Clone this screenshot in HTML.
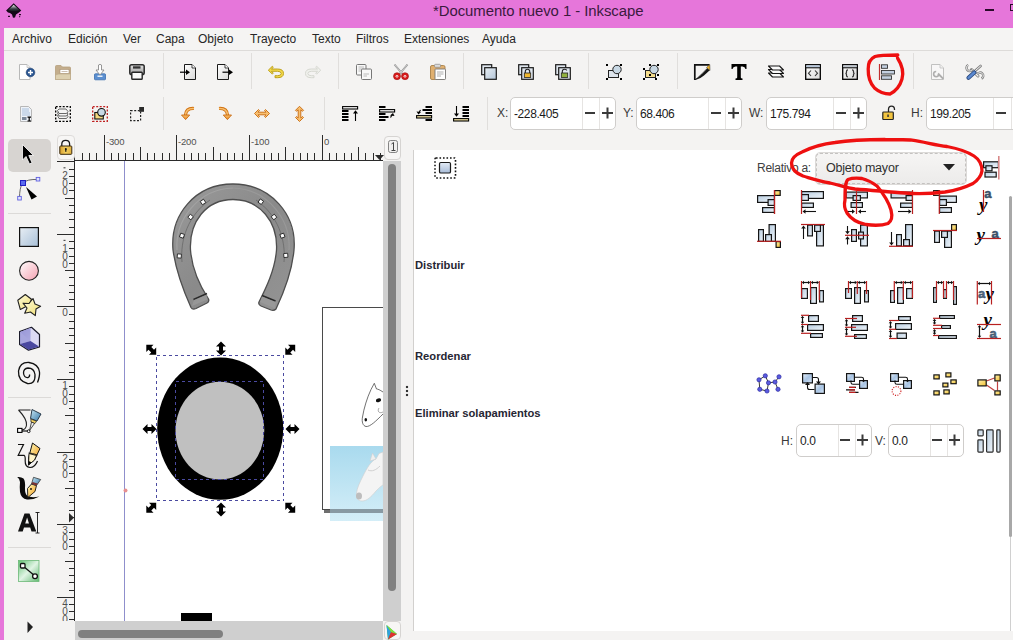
<!DOCTYPE html>
<html><head><meta charset="utf-8">
<style>
*{margin:0;padding:0;box-sizing:border-box}
html,body{width:1013px;height:640px;overflow:hidden;background:#f4f3f2;font-family:"Liberation Sans",sans-serif;color:#222;position:relative}
.a{position:absolute}
.mi{position:absolute;top:32px;font-size:12px;color:#262626;white-space:nowrap}
.sep{position:absolute;width:1px;background:#e0dedc}
.lbl{position:absolute;font-size:12px;color:#3a3a3a;white-space:nowrap}
.sp{position:absolute;height:33px;background:#fff;border:1px solid #cfcdcb;border-radius:5px}
.sp .v{position:absolute;left:3px;top:9px;font-size:12px;letter-spacing:-0.4px;color:#1a1a1a}
.sp .d{position:absolute;top:0;width:1px;height:31px;background:#e6e4e2}
.sec{position:absolute;left:415px;font-size:11.2px;font-weight:bold;color:#262633;white-space:nowrap}
</style></head><body>
<div class="a" style="left:0;top:0;width:1013px;height:28px;background:#e676da"></div>
<div class="a" style="left:0;top:0;width:4px;height:640px;background:#e676da"></div>
<svg class="a" style="left:0;top:0" width="30" height="25">
<defs><linearGradient id="lg" x1="0" y1="0" x2="0" y2="1"><stop offset="0" stop-color="#f4f4f4"/><stop offset="0.6" stop-color="#3a4048"/><stop offset="1" stop-color="#101418"/></linearGradient></defs>
<path d="M13.7 3.3 L21.3 10.5 L19 12.5 L17.5 13.5 L16 14.5 L15 17.5 L13 17.8 L12 14.5 L10 13 L8 12.5 L6.1 10.5 Z" fill="#140818"/>
<path d="M13.7 4.8 L19.5 10.3 L13.7 11.5 L8 10.3 Z" fill="url(#lg)"/>
<rect x="8" y="15.8" width="2" height="1.2" fill="#2a0a2a"/><rect x="19" y="14" width="2" height="1.2" fill="#2a0a2a"/><rect x="19" y="16.2" width="1.2" height="1" fill="#2a0a2a"/>
</svg>
<div class="a" style="left:433px;top:3px;font-size:14.9px;letter-spacing:-0.05px;color:#3b1a3e;white-space:nowrap">*Documento nuevo 1 - Inkscape</div>
<div class="a" style="left:985px;top:9px;width:9px;height:2px;background:#2a0a2a"></div>
<div class="a" style="left:1010px;top:4px;width:8px;height:7px;border:1.5px solid #2a0a2a"></div>
<div class="a" style="left:4px;top:28px;width:1009px;height:23px;background:#f5f4f3;border-bottom:1px solid #dddbd9"></div>
<div class="mi" style="left:12px">Archivo</div>
<div class="mi" style="left:68px">Edición</div>
<div class="mi" style="left:123px">Ver</div>
<div class="mi" style="left:156px">Capa</div>
<div class="mi" style="left:198px">Objeto</div>
<div class="mi" style="left:250px">Trayecto</div>
<div class="mi" style="left:312px">Texto</div>
<div class="mi" style="left:356px">Filtros</div>
<div class="mi" style="left:404px">Extensiones</div>
<div class="mi" style="left:482px">Ayuda</div>

<div class="sep" style="left:163px;top:53px;height:36px"></div>
<div class="sep" style="left:251px;top:53px;height:36px"></div>
<div class="sep" style="left:338px;top:53px;height:36px"></div>
<div class="sep" style="left:463px;top:53px;height:36px"></div>
<div class="sep" style="left:588px;top:53px;height:36px"></div>
<div class="sep" style="left:677px;top:53px;height:36px"></div>
<div class="sep" style="left:913px;top:53px;height:36px"></div>
<div class="sep" style="left:163px;top:97px;height:33px"></div>
<div class="sep" style="left:324px;top:97px;height:33px"></div>
<div class="sep" style="left:487px;top:97px;height:33px"></div>

<div class="lbl" style="left:497px;top:106px">X:</div>
<div class="sp" style="left:510px;top:97px;width:106px"><span class="v">-228.405</span><div class="d" style="left:71px"></div><div class="d" style="left:88px"></div></div>
<div class="lbl" style="left:623px;top:106px">Y:</div>
<div class="sp" style="left:636px;top:97px;width:106px"><span class="v">68.406</span><div class="d" style="left:71px"></div><div class="d" style="left:88px"></div></div>
<div class="lbl" style="left:749px;top:106px">W:</div>
<div class="sp" style="left:766px;top:97px;width:101px"><span class="v">175.794</span><div class="d" style="left:66px"></div><div class="d" style="left:83px"></div></div>
<div class="lbl" style="left:911px;top:106px">H:</div>
<div class="sp" style="left:926px;top:97px;width:120px"><span class="v">199.205</span><div class="d" style="left:66px"></div><div class="d" style="left:84px"></div></div>

<!-- toolbox -->
<div class="a" style="left:8px;top:139px;width:43px;height:33px;background:#d7d4d1;border-radius:5px"></div>
<div class="a" style="left:8px;top:213px;width:43px;height:1px;background:#dcdad8"></div>
<div class="a" style="left:8px;top:397px;width:43px;height:1px;background:#dcdad8"></div>
<div class="a" style="left:8px;top:547px;width:43px;height:1px;background:#dcdad8"></div>
<svg class="a" style="left:0;top:0" width="60" height="640">
<defs>
<linearGradient id="trc" x1="0" y1="0" x2="1" y2="1"><stop offset="0" stop-color="#e8eef4"/><stop offset="1" stop-color="#a8c0d8"/></linearGradient>
<linearGradient id="tci" x1="0" y1="0" x2="1" y2="1"><stop offset="0" stop-color="#fff"/><stop offset="1" stop-color="#f4a0b0"/></linearGradient>
<linearGradient id="tst" x1="0" y1="0" x2="1" y2="1"><stop offset="0" stop-color="#fffbe0"/><stop offset="1" stop-color="#f0e070"/></linearGradient>
<linearGradient id="tbx" x1="0" y1="0" x2="1" y2="1"><stop offset="0" stop-color="#8a88d0"/><stop offset="1" stop-color="#e8e6f8"/></linearGradient>
<linearGradient id="tgr" x1="0" y1="0" x2="1" y2="1"><stop offset="0" stop-color="#60c070"/><stop offset="0.5" stop-color="#e0f4e4"/><stop offset="1" stop-color="#60b870"/></linearGradient>
<linearGradient id="tbl" x1="0" y1="0" x2="1" y2="1"><stop offset="0" stop-color="#c8e8f4"/><stop offset="1" stop-color="#3878a8"/></linearGradient>
<linearGradient id="tyl" x1="0" y1="0" x2="1" y2="1"><stop offset="0" stop-color="#ffffc0"/><stop offset="1" stop-color="#f09010"/></linearGradient>
</defs>
<!-- select arrow -->
<path d="M22.5 144.5 L22.5 160 L26 156.5 L29.5 164 L32 162.8 L28.8 155.5 L33.5 155.5 Z" fill="#000" stroke="#fff" stroke-width="0.8" stroke-linejoin="round"/>
<!-- node -->
<path d="M23 183 Q27 179 38 179.5" fill="none" stroke="#666" stroke-width="1"/>
<path d="M22.5 183 Q19.5 188 19.5 198" fill="none" stroke="#666" stroke-width="1"/>
<rect x="20.5" y="180.5" width="5" height="5" fill="#5a6af0" stroke="#2020c0" stroke-width="1"/>
<rect x="36.2" y="177.4" width="3.6" height="3.6" fill="#e0e4ff" stroke="#6060e0" stroke-width="0.9"/>
<rect x="17.7" y="196.4" width="3.6" height="3.6" fill="#e0e4ff" stroke="#6060e0" stroke-width="0.9"/>
<path d="M26 187 L37 196.5 L31.5 199.5 Z" fill="#000"/>
<!-- rect -->
<rect x="19.6" y="227.6" width="18.8" height="18.8" fill="url(#trc)" stroke="#111" stroke-width="1.2"/>
<!-- circle -->
<circle cx="29" cy="270.8" r="9.4" fill="url(#tci)" stroke="#222" stroke-width="1.1"/>
<!-- star/polygon -->
<path d="M17.8 300.3 L25.3 294.5 L31.5 299.3 L29 305 L20.3 309.5 Z" fill="url(#tst)" stroke="#222" stroke-width="1.1" stroke-linejoin="round"/>
<path d="M33 298.5 L35 304 L40.6 306.2 L36 309 L35.3 315.6 L30.5 312 L24.7 313.3 L27 308 L23 303.2 L29 303.5 Z" fill="url(#tst)" stroke="#222" stroke-width="1.1" stroke-linejoin="round"/>
<!-- 3d box -->
<path d="M31.5 327.3 L19.6 331.6 L19.6 344.5 L28.5 350.2 L39.5 347 L39.5 334.5 Z" fill="#dcdaf4" stroke="#1a1a2a" stroke-width="1.2" stroke-linejoin="round"/>
<path d="M20.2 332 L30.5 341 L30.5 328" fill="url(#tbx)" opacity="0.9"/>
<path d="M20 332 L30.5 328 L30.5 341 L20 344 Z" fill="#9a98d8" opacity="0.8"/>
<path d="M20 344 L30.5 341 L39 346.5 L28.5 349.8 Z" fill="#4a48a0"/>
<!-- spiral -->
<path d="M37.5 382.5 Q40 376 39.5 372 Q38.5 364 29 362.5 Q20 362 18.5 371 Q18 381 27.5 383.5 Q35.5 384.5 35 374.5 Q34 368 28 368 Q23.5 368.5 23.5 373 Q24 378 28 377.5 Q30 377 29.5 374.5" fill="none" stroke="#111" stroke-width="1.3"/>
<!-- bezier pen -->
<path d="M18.5 410 H30.5 M18.5 410 Q27 419 26.5 425 Q26 429.5 22 430" fill="none" stroke="#222" stroke-width="1.1"/>
<rect x="17.6" y="428.4" width="4.4" height="4" fill="#fff" stroke="#000" stroke-width="1.1"/>
<path d="M22 431 H27.5" stroke="#000" stroke-width="1.1"/>
<circle cx="28.7" cy="431.2" r="1.4" fill="#fff" stroke="#000" stroke-width="0.9"/>
<path d="M32 409.5 L41 414 L37 421 L30.5 418.5 Z" fill="url(#tbl)" stroke="#1a2a3a" stroke-width="0.9" stroke-linejoin="round"/>
<path d="M30.8 419 L36.5 421.2 L35 423.5 L31 422 Z" fill="#f0d060" stroke="#222" stroke-width="0.7"/>
<path d="M31.5 422 L34.5 423.5 L29.5 430.5 Z" fill="#eee" stroke="#222" stroke-width="0.8"/>
<!-- pencil -->
<path d="M18 444.5 H23.5 L18.2 455.3 H24 Q25.5 456 25.2 461 Q25 467 30 467.5 Q35 467.5 37.5 461" fill="none" stroke="#111" stroke-width="1.2"/>
<path d="M32.5 443 L40 448.5 L34.5 460 L28.5 465 L28.5 458 Z" fill="url(#tyl)" stroke="#111" stroke-width="1" stroke-linejoin="round"/>
<path d="M28.6 453 Q32 453 37.5 455" fill="none" stroke="#111" stroke-width="0.9"/>
<path d="M29 453.5 L36.5 455.5 L34.5 460 L28.5 465 Z" fill="#fff4c8" stroke="#111" stroke-width="0.9" stroke-linejoin="round"/>
<path d="M28.5 461 L28.5 465 L31.5 462.3 Z" fill="#000"/>
<!-- calligraphy -->
<path d="M17.2 477 Q21 476.5 23.5 478.5 Q25.5 481 25 488 Q24.8 494 27.5 496 Q31 498 39.5 496.5 Q33 500 27 499.5 Q21 498.5 20 492 Q19.5 486 20 482 Q20 479 17.2 477 Z" fill="#0a0a0a"/>
<path d="M27.8 497.5 L27.5 488.5 L31.5 484 L36.5 485.5 L35 491.5 Z" fill="url(#tyl)" stroke="#111" stroke-width="0.9" stroke-linejoin="round"/>
<circle cx="31" cy="489" r="0.9" fill="#000"/>
<path d="M31.5 484 L33.5 477.3 L40.7 479.5 L36.5 485.5 Z" fill="url(#tbl)" stroke="#222" stroke-width="0.7"/>
<path d="M31.8 484 L36.5 485.5 L37.5 483.5 L32.5 482 Z" fill="#7a3030"/>
<!-- text A -->
<path d="M18 531.5 L24.5 513.5 H29.5 L36.3 531.5 H31.5 L30.2 527.5 H24 L22.7 531.5 Z M25.2 523.5 H29 L27.1 517.5 Z" fill="#111" fill-rule="evenodd"/>
<path d="M35.5 512.5 H39.5 M37.5 512.5 V533 M35.5 533 H39.5" stroke="#111" stroke-width="0.9"/>
<!-- connector -->
<rect x="18.5" y="560.5" width="20.5" height="21" fill="url(#tgr)" stroke="#6cb878" stroke-width="0.8"/>
<path d="M23 566 L35 576" stroke="#111" stroke-width="1.3"/>
<rect x="20.5" y="563.5" width="4.5" height="4.5" rx="1" fill="#fff" stroke="#111" stroke-width="1.3"/>
<circle cx="35" cy="576.2" r="2.4" fill="#fff" stroke="#111" stroke-width="1.3"/>
<!-- more arrow -->
<path d="M27.5 621.5 L33 627 L27.5 633 Z" fill="#222"/>
</svg>


<!-- canvas -->
<div class="a" style="left:75px;top:161px;width:308px;height:460px;background:#fff;overflow:hidden">
<svg style="position:absolute;left:0;top:0" width="308" height="460" viewBox="75 161 308 460">
<defs>
<linearGradient id="hs" x1="0" y1="0" x2="1" y2="1"><stop offset="0" stop-color="#9a9a9a"/><stop offset="0.5" stop-color="#8a8a8a"/><stop offset="1" stop-color="#949494"/></linearGradient>
<linearGradient id="sky" x1="0" y1="0" x2="0" y2="1"><stop offset="0" stop-color="#a9daee"/><stop offset="1" stop-color="#d4eef8"/></linearGradient>
</defs>
<!-- guide -->
<line x1="124.5" y1="161" x2="124.5" y2="621" stroke="#8f8fcc" stroke-width="1"/>
<circle cx="125.5" cy="490.5" r="2" fill="#e89090"/>
<!-- horseshoe -->
<path d="M191 307.5 C184 292, 176 272, 173 250 C170 215, 195 184, 233 184 C271 184, 297 215, 294 250 C292 272, 284 292, 276 309 Q274 311 271 310 L261 306 Q258 304.5 259 302 C266 288, 275 270, 276.5 250 C278 222, 260 199.5, 233 199.5 C206 199.5, 189 222, 190.5 250 C192 270, 200 286, 208.5 299 Q209.5 301.5 207 303 L196 308.5 Q192.5 310 191 307.5 Z" fill="url(#hs)" stroke="#4e4e4e" stroke-width="1.3" stroke-linejoin="round"/>
<path d="M177 250 C175 220, 198 189, 233 188" fill="none" stroke="#a8a8a8" stroke-width="1.2" opacity="0.7"/>
<path d="M233 188 C268 189, 291 220, 289 250" fill="none" stroke="#a0a0a0" stroke-width="1.2" opacity="0.6"/>
<path d="M182 262 C180 240, 188 215, 210 200" fill="none" stroke="#5e5e5e" stroke-width="0.8" opacity="0.8"/>
<path d="M284 262 C286 240, 278 215, 256 200" fill="none" stroke="#5e5e5e" stroke-width="0.8" opacity="0.8"/>
<path d="M193.5 299.5 L207 293.5" stroke="#2a2a2a" stroke-width="1.6"/>
<path d="M262 295.5 L275.5 301" stroke="#2a2a2a" stroke-width="1.6"/>
<path d="M192 306 L207.5 299.5 L207 294.5 L194 300 Z" fill="#9c9c9c" opacity="0.7"/>
<path d="M260 302 L275 308.5 L275.5 302 L262 296.5 Z" fill="#9c9c9c" opacity="0.7"/>
<g fill="#fff" stroke="#2a2a2a" stroke-width="0.9">
<rect x="201" y="200" width="4" height="4" transform="rotate(-35 203 202)"/>
<rect x="188.6" y="215" width="4" height="4" transform="rotate(-50 190.6 217)"/>
<rect x="180" y="233.7" width="4" height="4" transform="rotate(-70 182 235.7)"/>
<rect x="177.3" y="254" width="4" height="4" transform="rotate(-85 179.3 256)"/>
<rect x="258.8" y="199.7" width="4" height="4" transform="rotate(35 260.8 201.7)"/>
<rect x="272" y="215" width="4" height="4" transform="rotate(50 274 217)"/>
<rect x="280.4" y="233.7" width="4" height="4" transform="rotate(70 282.4 235.7)"/>
<rect x="283.8" y="253.4" width="4" height="4" transform="rotate(85 285.8 255.4)"/>
</g>
<!-- page -->
<rect x="324" y="509" width="70" height="4" fill="#6f6f6f"/>
<rect x="322.5" y="307.5" width="80" height="202" fill="#fff" stroke="#4a4a4a" stroke-width="1"/>
<!-- blue pic -->
<rect x="330" y="446" width="60" height="75" fill="url(#sky)"/>
<rect x="330" y="509" width="60" height="4" fill="#7f9099" opacity="0.9"/>
<path d="M383 452 L379 453.5 L376 459 C371 461, 367 468, 363 476 C360 482, 357 488, 356.5 493 C356 498, 358 501, 362 501 C367 501, 371 497, 376 491 C379 488, 381 486, 383 485 Z" fill="#f4f4f4" stroke="#cfcfcf" stroke-width="0.6"/>
<path d="M370 461 L372.5 453 L376 459 Z" fill="#eee" stroke="#ccc" stroke-width="0.5"/>
<path d="M368 470 C372 472, 376 470, 380 466" fill="none" stroke="#c8c8c8" stroke-width="0.8"/>
<ellipse cx="359" cy="496" rx="3" ry="3.5" fill="#bdbdbd"/>
<!-- line horse -->
<path d="M383 392 C380 390, 378 389, 376.5 389 L374.3 383.3 L371 389.5 C367 398, 364 408, 362.5 417 C361.5 422, 363 426, 366 426.5 C370 427, 376 421, 383 414" fill="none" stroke="#333" stroke-width="0.7"/>
<path d="M379 408 C377 411, 379 414, 383 412" fill="none" stroke="#555" stroke-width="0.5"/>
<ellipse cx="378.5" cy="400.3" rx="2.7" ry="1.8" fill="#111" transform="rotate(-20 378.5 400.3)"/>
<ellipse cx="365.8" cy="419.8" rx="1.3" ry="1.7" fill="#111"/>
<!-- ellipse -->
<ellipse cx="220.2" cy="428.6" rx="63" ry="71.2" fill="#000"/>
<ellipse cx="219.9" cy="430.6" rx="44.4" ry="48.9" fill="#c0c0c0"/>
<g fill="none" stroke="#4a4aa0" stroke-width="1" stroke-dasharray="3 3" shape-rendering="crispEdges">
<rect x="156.5" y="355.5" width="127" height="145"/>
<rect x="175.5" y="381.5" width="88" height="97.5"/>
</g>
<!-- handles -->
<g fill="#000">
<path d="M221 341.5 L226 346.5 L223 346.5 L223 350.5 L226 350.5 L221 355.5 L216 350.5 L219 350.5 L219 346.5 L216 346.5 Z"/>
<path d="M221 341.5 L226 346.5 L223 346.5 L223 350.5 L226 350.5 L221 355.5 L216 350.5 L219 350.5 L219 346.5 L216 346.5 Z" transform="translate(0 161)"/>
<path d="M142.5 429 L147.5 424 L147.5 427 L151.5 427 L151.5 424 L156.5 429 L151.5 434 L151.5 431 L147.5 431 L147.5 434 Z"/>
<path d="M142.5 429 L147.5 424 L147.5 427 L151.5 427 L151.5 424 L156.5 429 L151.5 434 L151.5 431 L147.5 431 L147.5 434 Z" transform="translate(143 0)"/>
<path d="M146.3 344.8 L153.5 344.8 L151.3 347 L154 349.7 L156.2 347.5 L156.2 354.7 L149 354.7 L151.2 352.5 L148.5 349.8 L146.3 352 Z"/>
<path d="M146.3 344.8 L153.5 344.8 L151.3 347 L154 349.7 L156.2 347.5 L156.2 354.7 L149 354.7 L151.2 352.5 L148.5 349.8 L146.3 352 Z" transform="translate(441.5 0) scale(-1 1)"/>
<path d="M146.3 344.8 L153.5 344.8 L151.3 347 L154 349.7 L156.2 347.5 L156.2 354.7 L149 354.7 L151.2 352.5 L148.5 349.8 L146.3 352 Z" transform="translate(0 857.5) scale(1 -1)"/>
<path d="M146.3 344.8 L153.5 344.8 L151.3 347 L154 349.7 L156.2 347.5 L156.2 354.7 L149 354.7 L151.2 352.5 L148.5 349.8 L146.3 352 Z" transform="translate(441.5 857.5) scale(-1 -1)"/>
</g>
<!-- bottom black -->
<rect x="181" y="613" width="31" height="8" fill="#000"/>
</svg>

</div>
<svg class="a" style="left:0;top:0" width="1013" height="640">
<g stroke="#2b2b2b" stroke-width="1" shape-rendering="crispEdges"><line x1="74.5" y1="153" x2="74.5" y2="160.5"/><line x1="82.5" y1="153" x2="82.5" y2="160.5"/><line x1="89.5" y1="153" x2="89.5" y2="160.5"/><line x1="96.5" y1="153" x2="96.5" y2="160.5"/><line x1="104.5" y1="135" x2="104.5" y2="160.5"/><line x1="111.5" y1="153" x2="111.5" y2="160.5"/><line x1="118.5" y1="153" x2="118.5" y2="160.5"/><line x1="125.5" y1="153" x2="125.5" y2="160.5"/><line x1="133.5" y1="153" x2="133.5" y2="160.5"/><line x1="140.5" y1="147" x2="140.5" y2="160.5"/><line x1="147.5" y1="153" x2="147.5" y2="160.5"/><line x1="154.5" y1="153" x2="154.5" y2="160.5"/><line x1="162.5" y1="153" x2="162.5" y2="160.5"/><line x1="169.5" y1="153" x2="169.5" y2="160.5"/><line x1="176.5" y1="135" x2="176.5" y2="160.5"/><line x1="184.5" y1="153" x2="184.5" y2="160.5"/><line x1="191.5" y1="153" x2="191.5" y2="160.5"/><line x1="198.5" y1="153" x2="198.5" y2="160.5"/><line x1="205.5" y1="153" x2="205.5" y2="160.5"/><line x1="213.5" y1="147" x2="213.5" y2="160.5"/><line x1="220.5" y1="153" x2="220.5" y2="160.5"/><line x1="227.5" y1="153" x2="227.5" y2="160.5"/><line x1="234.5" y1="153" x2="234.5" y2="160.5"/><line x1="242.5" y1="153" x2="242.5" y2="160.5"/><line x1="249.5" y1="135" x2="249.5" y2="160.5"/><line x1="256.5" y1="153" x2="256.5" y2="160.5"/><line x1="264.5" y1="153" x2="264.5" y2="160.5"/><line x1="271.5" y1="153" x2="271.5" y2="160.5"/><line x1="278.5" y1="153" x2="278.5" y2="160.5"/><line x1="285.5" y1="147" x2="285.5" y2="160.5"/><line x1="293.5" y1="153" x2="293.5" y2="160.5"/><line x1="300.5" y1="153" x2="300.5" y2="160.5"/><line x1="307.5" y1="153" x2="307.5" y2="160.5"/><line x1="314.5" y1="153" x2="314.5" y2="160.5"/><line x1="322.5" y1="135" x2="322.5" y2="160.5"/><line x1="329.5" y1="153" x2="329.5" y2="160.5"/><line x1="336.5" y1="153" x2="336.5" y2="160.5"/><line x1="344.5" y1="153" x2="344.5" y2="160.5"/><line x1="351.5" y1="153" x2="351.5" y2="160.5"/><line x1="358.5" y1="147" x2="358.5" y2="160.5"/><line x1="365.5" y1="153" x2="365.5" y2="160.5"/><line x1="373.5" y1="153" x2="373.5" y2="160.5"/><line x1="380.5" y1="153" x2="380.5" y2="160.5"/><line x1="74" y1="160.5" x2="383" y2="160.5"/><line x1="57" y1="161.5" x2="74.5" y2="161.5"/><line x1="69" y1="169.5" x2="74.5" y2="169.5"/><line x1="69" y1="176.5" x2="74.5" y2="176.5"/><line x1="69" y1="183.5" x2="74.5" y2="183.5"/><line x1="69" y1="190.5" x2="74.5" y2="190.5"/><line x1="65" y1="198.5" x2="74.5" y2="198.5"/><line x1="69" y1="205.5" x2="74.5" y2="205.5"/><line x1="69" y1="212.5" x2="74.5" y2="212.5"/><line x1="69" y1="219.5" x2="74.5" y2="219.5"/><line x1="69" y1="227.5" x2="74.5" y2="227.5"/><line x1="57" y1="234.5" x2="74.5" y2="234.5"/><line x1="69" y1="241.5" x2="74.5" y2="241.5"/><line x1="69" y1="248.5" x2="74.5" y2="248.5"/><line x1="69" y1="256.5" x2="74.5" y2="256.5"/><line x1="69" y1="263.5" x2="74.5" y2="263.5"/><line x1="65" y1="270.5" x2="74.5" y2="270.5"/><line x1="69" y1="277.5" x2="74.5" y2="277.5"/><line x1="69" y1="285.5" x2="74.5" y2="285.5"/><line x1="69" y1="292.5" x2="74.5" y2="292.5"/><line x1="69" y1="299.5" x2="74.5" y2="299.5"/><line x1="57" y1="306.5" x2="74.5" y2="306.5"/><line x1="69" y1="314.5" x2="74.5" y2="314.5"/><line x1="69" y1="321.5" x2="74.5" y2="321.5"/><line x1="69" y1="328.5" x2="74.5" y2="328.5"/><line x1="69" y1="335.5" x2="74.5" y2="335.5"/><line x1="65" y1="343.5" x2="74.5" y2="343.5"/><line x1="69" y1="350.5" x2="74.5" y2="350.5"/><line x1="69" y1="357.5" x2="74.5" y2="357.5"/><line x1="69" y1="365.5" x2="74.5" y2="365.5"/><line x1="69" y1="372.5" x2="74.5" y2="372.5"/><line x1="57" y1="379.5" x2="74.5" y2="379.5"/><line x1="69" y1="386.5" x2="74.5" y2="386.5"/><line x1="69" y1="394.5" x2="74.5" y2="394.5"/><line x1="69" y1="401.5" x2="74.5" y2="401.5"/><line x1="69" y1="408.5" x2="74.5" y2="408.5"/><line x1="65" y1="415.5" x2="74.5" y2="415.5"/><line x1="69" y1="423.5" x2="74.5" y2="423.5"/><line x1="69" y1="430.5" x2="74.5" y2="430.5"/><line x1="69" y1="437.5" x2="74.5" y2="437.5"/><line x1="69" y1="444.5" x2="74.5" y2="444.5"/><line x1="57" y1="452.5" x2="74.5" y2="452.5"/><line x1="69" y1="459.5" x2="74.5" y2="459.5"/><line x1="69" y1="466.5" x2="74.5" y2="466.5"/><line x1="69" y1="473.5" x2="74.5" y2="473.5"/><line x1="69" y1="481.5" x2="74.5" y2="481.5"/><line x1="65" y1="488.5" x2="74.5" y2="488.5"/><line x1="69" y1="495.5" x2="74.5" y2="495.5"/><line x1="69" y1="502.5" x2="74.5" y2="502.5"/><line x1="69" y1="510.5" x2="74.5" y2="510.5"/><line x1="69" y1="517.5" x2="74.5" y2="517.5"/><line x1="57" y1="524.5" x2="74.5" y2="524.5"/><line x1="69" y1="532.5" x2="74.5" y2="532.5"/><line x1="69" y1="539.5" x2="74.5" y2="539.5"/><line x1="69" y1="546.5" x2="74.5" y2="546.5"/><line x1="69" y1="553.5" x2="74.5" y2="553.5"/><line x1="65" y1="561.5" x2="74.5" y2="561.5"/><line x1="69" y1="568.5" x2="74.5" y2="568.5"/><line x1="69" y1="575.5" x2="74.5" y2="575.5"/><line x1="69" y1="582.5" x2="74.5" y2="582.5"/><line x1="69" y1="590.5" x2="74.5" y2="590.5"/><line x1="57" y1="597.5" x2="74.5" y2="597.5"/><line x1="69" y1="604.5" x2="74.5" y2="604.5"/><line x1="69" y1="611.5" x2="74.5" y2="611.5"/><line x1="69" y1="619.5" x2="74.5" y2="619.5"/><line x1="74.5" y1="161" x2="74.5" y2="621"/></g>
<g font-family="Liberation Sans" font-size="10" fill="#505050"><text x="106" y="144.8" font-size="9.5" letter-spacing="-0.2">-300</text><text x="178" y="144.8" font-size="9.5" letter-spacing="-0.2">-200</text><text x="251" y="144.8" font-size="9.5" letter-spacing="-0.2">-100</text><text x="324" y="144.8" font-size="9.5" letter-spacing="-0.2">0</text><rect x="63.5" y="167.2" width="2" height="1.2"/><text x="65" y="179.2" text-anchor="middle">2</text><text x="65" y="187.2" text-anchor="middle">0</text><text x="65" y="195.2" text-anchor="middle">0</text><rect x="63.5" y="239.8" width="2" height="1.2"/><text x="65" y="251.8" text-anchor="middle">1</text><text x="65" y="259.9" text-anchor="middle">0</text><text x="65" y="267.9" text-anchor="middle">0</text><text x="65" y="316.4" text-anchor="middle">0</text><text x="65" y="389.0" text-anchor="middle">1</text><text x="65" y="397.0" text-anchor="middle">0</text><text x="65" y="405.0" text-anchor="middle">0</text><text x="65" y="461.6" text-anchor="middle">2</text><text x="65" y="469.6" text-anchor="middle">0</text><text x="65" y="477.6" text-anchor="middle">0</text><text x="65" y="534.2" text-anchor="middle">3</text><text x="65" y="542.2" text-anchor="middle">0</text><text x="65" y="550.2" text-anchor="middle">0</text><text x="65" y="606.8" text-anchor="middle">4</text><text x="65" y="614.8" text-anchor="middle">0</text><text x="65" y="622.8" text-anchor="middle">0</text></g>
<path d="M375 155 L384 155 L379.5 160 Z" fill="#2b2b2b"/>
</svg>
<div class="a" style="left:52px;top:621px;width:23px;height:19px;background:#f4f3f2"></div>
<div class="a" style="left:57px;top:135px;width:18px;height:25px;background:#f7f6f5;border:1px solid #dedcda;border-radius:4px"></div>
<!-- vscroll -->
<div class="a" style="left:383px;top:161px;width:18px;height:460px;background:#cfcfcf"></div>
<div class="a" style="left:388px;top:164px;width:8px;height:427px;background:#808080;border-radius:4px"></div>
<div class="a" style="left:384px;top:136px;width:17px;height:24px;background:#f7f6f5;border:1px solid #d6d4d2;border-radius:4px"></div>
<!-- hscroll -->
<div class="a" style="left:75px;top:621px;width:308px;height:19px;background:#cfcfcf"></div>
<div class="a" style="left:78px;top:630px;width:145px;height:8px;background:#808080;border-radius:4px"></div>
<div class="a" style="left:384px;top:621px;width:17px;height:19px;background:#f7f6f5;border:1px solid #d6d4d2;border-radius:4px"></div>

<svg class="a" style="left:0;top:0" width="400" height="640">
<defs><linearGradient id="lkg" x1="0" y1="0" x2="1" y2="0"><stop offset="0" stop-color="#d8a030"/><stop offset="0.5" stop-color="#f4d060"/><stop offset="1" stop-color="#e0b040"/></linearGradient></defs>
<path d="M61.8 146.5 V144 Q61.8 140.3 65.7 140.3 Q69.6 140.3 69.6 144 V146.5" fill="none" stroke="#1a1a1a" stroke-width="1.3"/>
<rect x="59.8" y="146" width="12" height="8.3" rx="0.8" fill="url(#lkg)" stroke="#3a2a10" stroke-width="1"/>
<circle cx="65.8" cy="148.9" r="1" fill="#111"/><rect x="65.2" y="149" width="1.2" height="2.8" fill="#111"/>
<path d="M69 513 L74 517.7 L69 522.5 Z" fill="#2a2a2a"/>
<!-- vruler "1" page button glyph -->
<rect x="388.5" y="140.5" width="9" height="12" rx="2" fill="#f0efee" stroke="#777" stroke-width="0.9"/>
<path d="M391.5 144 L393.5 142.5 V150.5 M391.5 150.5 H395.5" fill="none" stroke="#444" stroke-width="1"/>
<!-- color picker -->
<path d="M386.5 625 L397 634 L388 639.5 Z" fill="#40c040"/>
<path d="M386.5 625 L388 639.5 L391 632 Z" fill="#30a0e0"/>
<path d="M391 632 L397 634 L388 639.5 Z" fill="#e03030"/>
<path d="M386.5 625 L391 632 L397 634 Z" fill="#80e040"/>
</svg>

<!-- dialog -->
<div class="a" style="left:413px;top:150px;width:600px;height:481px;background:#fff;border-left:1px solid #d2d0ce"></div>
<div class="a" style="left:1009px;top:196px;width:3px;height:341px;background:#a8a8a8;border-radius:2px"></div>
<div class="a" style="left:1010px;top:537px;width:1px;height:94px;background:#d0d0d0"></div>
<div class="a" style="left:405px;top:385px;width:4px;height:12px;background:radial-gradient(circle,#333 1.3px,transparent 1.6px) 0 0/4px 4px"></div>
<div class="lbl" style="left:757px;top:161px;letter-spacing:-0.25px;color:#404040">Relativo a:</div>
<div class="a" style="left:815px;top:152px;width:152px;height:33px;background:linear-gradient(#f6f5f4,#ecebea);border:1px solid #dcdad8;border-radius:5px"></div>
<div class="a" style="left:816px;top:153px;width:150px;height:31px;border:1px dashed #c4c2c0;border-radius:4px"></div>
<div class="a" style="left:826px;top:161px;font-size:12.5px;letter-spacing:-0.2px;color:#303030;white-space:nowrap">Objeto mayor</div>
<svg class="a" style="left:942px;top:164px" width="14" height="7"><path d="M1 0 L13 0 L7 6.5Z" fill="#222"/></svg>
<div class="sec" style="top:259px">Distribuir</div>
<div class="sec" style="top:350px">Reordenar</div>
<div class="sec" style="top:407px">Eliminar solapamientos</div>
<div class="lbl" style="left:781px;top:434px">H:</div>
<div class="sp" style="left:796px;top:424px;width:76px;height:33px"><span class="v" style="top:9px">0.0</span><div class="d" style="left:41px"></div><div class="d" style="left:58px"></div></div>
<div class="lbl" style="left:875px;top:434px">V:</div>
<div class="sp" style="left:888px;top:424px;width:76px;height:33px"><span class="v" style="top:9px">0.0</span><div class="d" style="left:41px"></div><div class="d" style="left:58px"></div></div>
<svg class="a" style="left:0;top:0" width="1013" height="640">
<defs>
<linearGradient id="bg" x1="0" y1="0" x2="1" y2="1"><stop offset="0" stop-color="#b8cde0"/><stop offset="1" stop-color="#f0f5fa"/></linearGradient>
<linearGradient id="bg2" x1="0" y1="0" x2="1" y2="1"><stop offset="0" stop-color="#e8f0f8"/><stop offset="0.5" stop-color="#a8c4e4"/><stop offset="1" stop-color="#d8e6f4"/></linearGradient>
<linearGradient id="bg3" x1="0" y1="0" x2="0" y2="1"><stop offset="0" stop-color="#e4ecf6"/><stop offset="1" stop-color="#a8bcd8"/></linearGradient>
<linearGradient id="yg" x1="0" y1="0" x2="1" y2="1"><stop offset="0" stop-color="#fff0b0"/><stop offset="1" stop-color="#f0c030"/></linearGradient>
</defs>
<g font-family="Liberation Sans"><line x1="774.5" y1="190" x2="774.5" y2="214" stroke="#b82020" stroke-width="1.2"/>
<rect x="774.60" y="190.60" width="5.60" height="4.80" fill="url(#yg)" stroke="#151515" stroke-width="1.2"/>
<rect x="757.60" y="195.60" width="16.80" height="6.80" fill="url(#bg)" stroke="#151515" stroke-width="1.2"/>
<rect x="768.10" y="199.60" width="6.30" height="5.80" fill="url(#bg)" stroke="#151515" stroke-width="1.2"/>
<rect x="762.60" y="207.60" width="11.80" height="4.80" fill="url(#bg)" stroke="#151515" stroke-width="1.2"/>
<line x1="774.5" y1="190" x2="774.5" y2="214" stroke="#b82020" stroke-width="1.2"/>
<rect x="801.60" y="191.60" width="21.80" height="6.80" fill="url(#bg)" stroke="#151515" stroke-width="1.2"/>
<rect x="801.60" y="194.60" width="6.80" height="5.80" fill="url(#bg)" stroke="#151515" stroke-width="1.2"/>
<rect x="801.60" y="203.10" width="11.80" height="4.30" fill="url(#bg)" stroke="#151515" stroke-width="1.2"/>
<line x1="801.5" y1="190" x2="801.5" y2="214" stroke="#b82020" stroke-width="1.2"/>
<line x1="816" y1="211.5" x2="804.5" y2="211.5" stroke="#111" stroke-width="1.1"/>
<path d="M802.5 211.5 L805.5 209.2 L805.5 213.8 Z" fill="#111"/>
<rect x="846.10" y="192.10" width="21.30" height="5.80" fill="url(#bg)" stroke="#151515" stroke-width="1.2"/>
<rect x="853.10" y="195.60" width="7.30" height="4.80" fill="url(#bg)" stroke="#151515" stroke-width="1.2"/>
<rect x="851.10" y="202.60" width="11.30" height="4.80" fill="url(#bg)" stroke="#151515" stroke-width="1.2"/>
<line x1="856.5" y1="191" x2="856.5" y2="214" stroke="#b82020" stroke-width="1.2"/>
<line x1="847" y1="211.5" x2="853" y2="211.5" stroke="#111" stroke-width="1.1"/>
<path d="M855 211.5 L852 209.2 L852 213.8 Z" fill="#111"/>
<line x1="866" y1="211.5" x2="860" y2="211.5" stroke="#111" stroke-width="1.1"/>
<path d="M858 211.5 L861 209.2 L861 213.8 Z" fill="#111"/>
<rect x="891.10" y="192.10" width="21.30" height="5.80" fill="url(#bg)" stroke="#151515" stroke-width="1.2"/>
<rect x="906.10" y="195.60" width="6.30" height="4.80" fill="url(#bg)" stroke="#151515" stroke-width="1.2"/>
<rect x="900.60" y="203.10" width="11.80" height="4.30" fill="url(#bg)" stroke="#151515" stroke-width="1.2"/>
<line x1="912.5" y1="190" x2="912.5" y2="214" stroke="#b82020" stroke-width="1.2"/>
<line x1="898" y1="211.5" x2="909.5" y2="211.5" stroke="#111" stroke-width="1.1"/>
<path d="M911.5 211.5 L908.5 209.2 L908.5 213.8 Z" fill="#111"/>
<rect x="933.6" y="190.6" width="6" height="4.8" fill="#f4e4b0" stroke="#151515" stroke-width="1.1"/>
<rect x="939.60" y="196.10" width="16.80" height="6.30" fill="url(#bg)" stroke="#151515" stroke-width="1.2"/>
<rect x="939.60" y="199.60" width="6.80" height="5.80" fill="url(#bg)" stroke="#151515" stroke-width="1.2"/>
<rect x="939.60" y="207.60" width="11.80" height="4.80" fill="url(#bg)" stroke="#151515" stroke-width="1.2"/>
<line x1="939.3" y1="190" x2="939.3" y2="214" stroke="#b82020" stroke-width="1.2"/>
<text x="984.3" y="198" font-size="13" fill="#3a5068" font-weight="bold" stroke="#3a5068" stroke-width="0.5">a</text>
<text x="979" y="210.5" font-size="19" fill="#000" font-family="Liberation Serif" font-style="italic" font-weight="bold">y</text>
<line x1="983.5" y1="190" x2="983.5" y2="212" stroke="#b82020" stroke-width="1.2"/>
<rect x="758.60" y="229.60" width="4.80" height="11.80" fill="url(#bg)" stroke="#151515" stroke-width="1.2"/>
<rect x="769.10" y="224.60" width="6.30" height="16.80" fill="url(#bg)" stroke="#151515" stroke-width="1.2"/>
<rect x="765.60" y="234.60" width="5.80" height="6.80" fill="url(#bg)" stroke="#151515" stroke-width="1.2"/>
<rect x="776.10" y="241.60" width="4.30" height="5.80" fill="url(#yg)" stroke="#151515" stroke-width="1.2"/>
<line x1="757" y1="241.3" x2="781" y2="241.3" stroke="#b82020" stroke-width="1.2"/>
<rect x="807.60" y="225.10" width="4.80" height="10.80" fill="url(#bg)" stroke="#151515" stroke-width="1.2"/>
<rect x="816.60" y="225.10" width="6.80" height="20.80" fill="url(#bg)" stroke="#151515" stroke-width="1.2"/>
<rect x="814.60" y="225.10" width="5.80" height="6.30" fill="url(#bg)" stroke="#151515" stroke-width="1.2"/>
<line x1="801" y1="224.5" x2="825" y2="224.5" stroke="#b82020" stroke-width="1.2"/>
<line x1="803.5" y1="239" x2="803.5" y2="227.5" stroke="#111" stroke-width="1.1"/>
<path d="M803.5 225.5 L801.2 228.5 L805.8 228.5 Z" fill="#111"/>
<rect x="851.60" y="229.60" width="4.80" height="11.80" fill="url(#bg)" stroke="#151515" stroke-width="1.2"/>
<rect x="860.60" y="225.10" width="6.80" height="20.80" fill="url(#bg)" stroke="#151515" stroke-width="1.2"/>
<rect x="858.60" y="232.10" width="4.80" height="6.80" fill="url(#bg)" stroke="#151515" stroke-width="1.2"/>
<line x1="845" y1="235.3" x2="869" y2="235.3" stroke="#b82020" stroke-width="1.2"/>
<line x1="847.5" y1="226" x2="847.5" y2="232.3" stroke="#111" stroke-width="1.1"/>
<path d="M847.5 234.3 L845.2 231.3 L849.8 231.3 Z" fill="#111"/>
<line x1="847.5" y1="244.5" x2="847.5" y2="238.3" stroke="#111" stroke-width="1.1"/>
<path d="M847.5 236.3 L845.2 239.3 L849.8 239.3 Z" fill="#111"/>
<rect x="896.60" y="234.60" width="4.80" height="11.30" fill="url(#bg)" stroke="#151515" stroke-width="1.2"/>
<rect x="905.60" y="224.60" width="6.80" height="21.30" fill="url(#bg)" stroke="#151515" stroke-width="1.2"/>
<rect x="903.60" y="239.60" width="5.80" height="6.30" fill="url(#bg)" stroke="#151515" stroke-width="1.2"/>
<line x1="889" y1="246.3" x2="913" y2="246.3" stroke="#b82020" stroke-width="1.2"/>
<line x1="891.5" y1="232" x2="891.5" y2="243.5" stroke="#111" stroke-width="1.1"/>
<path d="M891.5 245.5 L889.2 242.5 L893.8 242.5 Z" fill="#111"/>
<rect x="934.60" y="231.10" width="4.80" height="11.30" fill="url(#bg)" stroke="#151515" stroke-width="1.2"/>
<rect x="944.60" y="231.10" width="6.80" height="16.30" fill="url(#bg)" stroke="#151515" stroke-width="1.2"/>
<rect x="941.60" y="231.10" width="5.80" height="6.30" fill="url(#bg)" stroke="#151515" stroke-width="1.2"/>
<rect x="951.60" y="224.60" width="4.80" height="5.80" fill="url(#yg)" stroke="#151515" stroke-width="1.2"/>
<line x1="933" y1="230.5" x2="957" y2="230.5" stroke="#b82020" stroke-width="1.2"/>
<text x="976.5" y="240.5" font-size="19" fill="#000" font-family="Liberation Serif" font-style="italic" font-weight="bold">y</text>
<text x="991.5" y="238.3" font-size="13" fill="#3a5068" font-weight="bold" stroke="#3a5068" stroke-width="0.5">a</text>
<line x1="977" y1="238.5" x2="1001" y2="238.5" stroke="#b82020" stroke-width="1.2"/>
<rect x="801.60" y="288.60" width="5.80" height="9.80" fill="url(#bg)" stroke="#151515" stroke-width="1.2"/>
<rect x="810.60" y="287.60" width="5.80" height="15.80" fill="url(#bg)" stroke="#151515" stroke-width="1.2"/>
<rect x="819.60" y="290.60" width="3.80" height="11.30" fill="url(#bg)" stroke="#151515" stroke-width="1.2"/>
<line x1="801.5" y1="281" x2="801.5" y2="298" stroke="#b82020" stroke-width="1.2"/>
<line x1="810.5" y1="281" x2="810.5" y2="300" stroke="#b82020" stroke-width="1.2"/>
<line x1="819.3" y1="281" x2="819.3" y2="300" stroke="#b82020" stroke-width="1.2"/>
<line x1="802.5" y1="282.5" x2="809.5" y2="282.5" stroke="#111" stroke-width="1.2"/>
<path d="M802.0 282.5 L804.0 280.7 L804.0 284.3 Z M810.0 282.5 L808.0 280.7 L808.0 284.3 Z" fill="#111"/>
<line x1="811.5" y1="282.5" x2="818.3" y2="282.5" stroke="#111" stroke-width="1.2"/>
<path d="M811.0 282.5 L813.0 280.7 L813.0 284.3 Z M818.8 282.5 L816.8 280.7 L816.8 284.3 Z" fill="#111"/>
<rect x="845.60" y="288.60" width="5.80" height="9.80" fill="url(#bg)" stroke="#151515" stroke-width="1.2"/>
<rect x="854.60" y="287.60" width="5.80" height="15.80" fill="url(#bg)" stroke="#151515" stroke-width="1.2"/>
<rect x="864.60" y="290.60" width="3.80" height="11.30" fill="url(#bg)" stroke="#151515" stroke-width="1.2"/>
<line x1="848.5" y1="281" x2="848.5" y2="293" stroke="#b82020" stroke-width="1.2"/>
<line x1="857.3" y1="281" x2="857.3" y2="294" stroke="#b82020" stroke-width="1.2"/>
<line x1="866.5" y1="281" x2="866.5" y2="294" stroke="#b82020" stroke-width="1.2"/>
<line x1="849.5" y1="282.5" x2="856.3" y2="282.5" stroke="#111" stroke-width="1.2"/>
<path d="M849.0 282.5 L851.0 280.7 L851.0 284.3 Z M856.8 282.5 L854.8 280.7 L854.8 284.3 Z" fill="#111"/>
<line x1="858.3" y1="282.5" x2="865.5" y2="282.5" stroke="#111" stroke-width="1.2"/>
<path d="M857.8 282.5 L859.8 280.7 L859.8 284.3 Z M866.0 282.5 L864.0 280.7 L864.0 284.3 Z" fill="#111"/>
<rect x="890.60" y="290.60" width="3.80" height="11.80" fill="url(#bg)" stroke="#151515" stroke-width="1.2"/>
<rect x="897.60" y="287.60" width="5.80" height="15.80" fill="url(#bg)" stroke="#151515" stroke-width="1.2"/>
<rect x="906.60" y="288.60" width="5.80" height="9.80" fill="url(#bg)" stroke="#151515" stroke-width="1.2"/>
<line x1="894.3" y1="281" x2="894.3" y2="300" stroke="#b82020" stroke-width="1.2"/>
<line x1="903.3" y1="281" x2="903.3" y2="300" stroke="#b82020" stroke-width="1.2"/>
<line x1="912.5" y1="281" x2="912.5" y2="298" stroke="#b82020" stroke-width="1.2"/>
<line x1="895.3" y1="282.5" x2="902.3" y2="282.5" stroke="#111" stroke-width="1.2"/>
<path d="M894.8 282.5 L896.8 280.7 L896.8 284.3 Z M902.8 282.5 L900.8 280.7 L900.8 284.3 Z" fill="#111"/>
<line x1="904.3" y1="282.5" x2="911.5" y2="282.5" stroke="#111" stroke-width="1.2"/>
<path d="M903.8 282.5 L905.8 280.7 L905.8 284.3 Z M912.0 282.5 L910.0 280.7 L910.0 284.3 Z" fill="#111"/>
<rect x="933.60" y="287.60" width="2.80" height="14.80" fill="url(#bg)" stroke="#151515" stroke-width="1.2"/>
<rect x="943.60" y="289.60" width="2.80" height="8.80" fill="url(#bg)" stroke="#151515" stroke-width="1.2"/>
<rect x="953.60" y="286.60" width="2.80" height="17.80" fill="url(#bg)" stroke="#151515" stroke-width="1.2"/>
<line x1="936.5" y1="281" x2="936.5" y2="300" stroke="#b82020" stroke-width="1.2"/>
<line x1="943.5" y1="281" x2="943.5" y2="298" stroke="#b82020" stroke-width="1.2"/>
<line x1="946.5" y1="281" x2="946.5" y2="298" stroke="#b82020" stroke-width="1.2"/>
<line x1="953.5" y1="281" x2="953.5" y2="300" stroke="#b82020" stroke-width="1.2"/>
<line x1="937.5" y1="282.5" x2="942.5" y2="282.5" stroke="#111" stroke-width="1.2"/>
<path d="M937.0 282.5 L939.0 280.7 L939.0 284.3 Z M943.0 282.5 L941.0 280.7 L941.0 284.3 Z" fill="#111"/>
<line x1="947.5" y1="282.5" x2="952.5" y2="282.5" stroke="#111" stroke-width="1.2"/>
<path d="M947.0 282.5 L949.0 280.7 L949.0 284.3 Z M953.0 282.5 L951.0 280.7 L951.0 284.3 Z" fill="#111"/>
<text x="978" y="298" font-size="13" fill="#506a84" font-weight="bold" stroke="#3a5068" stroke-width="0.5">a</text>
<text x="985.5" y="300" font-size="19" fill="#000" font-family="Liberation Serif" font-style="italic" font-weight="bold">y</text>
<line x1="977.3" y1="281" x2="977.3" y2="304.5" stroke="#b82020" stroke-width="1.2"/>
<line x1="991.5" y1="281" x2="991.5" y2="304.5" stroke="#b82020" stroke-width="1.2"/>
<line x1="978.3" y1="283.5" x2="990.5" y2="283.5" stroke="#111" stroke-width="1.2"/>
<path d="M977.8 283.5 L979.8 281.7 L979.8 285.3 Z M991.0 283.5 L989.0 281.7 L989.0 285.3 Z" fill="#111"/>
<rect x="808.60" y="315.60" width="9.80" height="5.80" fill="url(#bg)" stroke="#151515" stroke-width="1.2"/>
<rect x="807.60" y="324.60" width="15.80" height="5.80" fill="url(#bg)" stroke="#151515" stroke-width="1.2"/>
<rect x="810.60" y="333.60" width="11.80" height="3.80" fill="url(#bg)" stroke="#151515" stroke-width="1.2"/>
<line x1="801" y1="315.3" x2="809" y2="315.3" stroke="#b82020" stroke-width="1.2"/>
<line x1="801" y1="324.5" x2="808" y2="324.5" stroke="#b82020" stroke-width="1.2"/>
<line x1="801" y1="333.3" x2="811" y2="333.3" stroke="#b82020" stroke-width="1.2"/>
<line x1="802.5" y1="316.5" x2="802.5" y2="323.3" stroke="#111" stroke-width="1.2"/>
<path d="M802.5 316.0 L800.7 318.0 L804.3 318.0 Z M802.5 323.8 L800.7 321.8 L804.3 321.8 Z" fill="#111"/>
<line x1="802.5" y1="325.7" x2="802.5" y2="332" stroke="#111" stroke-width="1.2"/>
<path d="M802.5 325.2 L800.7 327.2 L804.3 327.2 Z M802.5 332.5 L800.7 330.5 L804.3 330.5 Z" fill="#111"/>
<rect x="852.60" y="315.60" width="9.80" height="5.80" fill="url(#bg)" stroke="#151515" stroke-width="1.2"/>
<rect x="851.60" y="324.60" width="15.80" height="5.80" fill="url(#bg)" stroke="#151515" stroke-width="1.2"/>
<rect x="854.60" y="334.60" width="11.80" height="3.80" fill="url(#bg)" stroke="#151515" stroke-width="1.2"/>
<line x1="845" y1="318.5" x2="857" y2="318.5" stroke="#b82020" stroke-width="1.2"/>
<line x1="845" y1="327.3" x2="856" y2="327.3" stroke="#b82020" stroke-width="1.2"/>
<line x1="845" y1="336.3" x2="857" y2="336.3" stroke="#b82020" stroke-width="1.2"/>
<line x1="846.5" y1="319.7" x2="846.5" y2="326" stroke="#111" stroke-width="1.2"/>
<path d="M846.5 319.2 L844.7 321.2 L848.3 321.2 Z M846.5 326.5 L844.7 324.5 L848.3 324.5 Z" fill="#111"/>
<line x1="846.5" y1="328.5" x2="846.5" y2="335" stroke="#111" stroke-width="1.2"/>
<path d="M846.5 328.0 L844.7 330.0 L848.3 330.0 Z M846.5 335.5 L844.7 333.5 L848.3 333.5 Z" fill="#111"/>
<rect x="898.60" y="316.60" width="11.80" height="3.80" fill="url(#bg)" stroke="#151515" stroke-width="1.2"/>
<rect x="895.60" y="323.60" width="15.80" height="5.80" fill="url(#bg)" stroke="#151515" stroke-width="1.2"/>
<rect x="897.10" y="333.10" width="9.30" height="5.30" fill="url(#bg)" stroke="#151515" stroke-width="1.2"/>
<line x1="889" y1="320.5" x2="899" y2="320.5" stroke="#b82020" stroke-width="1.2"/>
<line x1="889" y1="329.3" x2="896" y2="329.3" stroke="#b82020" stroke-width="1.2"/>
<line x1="889" y1="338.5" x2="897" y2="338.5" stroke="#b82020" stroke-width="1.2"/>
<line x1="890.5" y1="321.7" x2="890.5" y2="328" stroke="#111" stroke-width="1.2"/>
<path d="M890.5 321.2 L888.7 323.2 L892.3 323.2 Z M890.5 328.5 L888.7 326.5 L892.3 326.5 Z" fill="#111"/>
<line x1="890.5" y1="330.5" x2="890.5" y2="337.3" stroke="#111" stroke-width="1.2"/>
<path d="M890.5 330.0 L888.7 332.0 L892.3 332.0 Z M890.5 337.8 L888.7 335.8 L892.3 335.8 Z" fill="#111"/>
<rect x="939.60" y="315.60" width="14.80" height="2.80" fill="url(#bg)" stroke="#151515" stroke-width="1.2"/>
<rect x="941.60" y="325.60" width="8.80" height="2.80" fill="url(#bg)" stroke="#151515" stroke-width="1.2"/>
<rect x="938.60" y="335.60" width="17.80" height="2.80" fill="url(#bg)" stroke="#151515" stroke-width="1.2"/>
<line x1="933" y1="318.3" x2="940" y2="318.3" stroke="#b82020" stroke-width="1.2"/>
<line x1="933" y1="325.3" x2="942" y2="325.3" stroke="#b82020" stroke-width="1.2"/>
<line x1="933" y1="328.5" x2="942" y2="328.5" stroke="#b82020" stroke-width="1.2"/>
<line x1="933" y1="335.5" x2="939" y2="335.5" stroke="#b82020" stroke-width="1.2"/>
<line x1="934.5" y1="319.5" x2="934.5" y2="324" stroke="#111" stroke-width="1.2"/>
<path d="M934.5 319.0 L932.7 321.0 L936.3 321.0 Z M934.5 324.5 L932.7 322.5 L936.3 322.5 Z" fill="#111"/>
<line x1="934.5" y1="329.7" x2="934.5" y2="334.3" stroke="#111" stroke-width="1.2"/>
<path d="M934.5 329.2 L932.7 331.2 L936.3 331.2 Z M934.5 334.8 L932.7 332.8 L936.3 332.8 Z" fill="#111"/>
<text x="983.5" y="326" font-size="19" fill="#000" font-family="Liberation Serif" font-style="italic" font-weight="bold">y</text>
<text x="989.5" y="338.3" font-size="13" fill="#506a84" font-weight="bold" stroke="#3a5068" stroke-width="0.5">a</text>
<line x1="977" y1="324.5" x2="1001" y2="324.5" stroke="#b82020" stroke-width="1.2"/>
<line x1="977" y1="338.5" x2="1001" y2="338.5" stroke="#b82020" stroke-width="1.2"/>
<line x1="979.5" y1="325.7" x2="979.5" y2="337.3" stroke="#111" stroke-width="1.2"/>
<path d="M979.5 325.2 L977.7 327.2 L981.3 327.2 Z M979.5 337.8 L977.7 335.8 L981.3 335.8 Z" fill="#111"/>
<line x1="765.3" y1="375.8" x2="759" y2="379.8" stroke="#222" stroke-width="0.9"/>
<line x1="759" y1="379.8" x2="759.8" y2="389.3" stroke="#222" stroke-width="0.9"/>
<line x1="759.8" y1="389.3" x2="767" y2="391" stroke="#222" stroke-width="0.9"/>
<line x1="767" y1="391" x2="768.5" y2="382.8" stroke="#222" stroke-width="0.9"/>
<line x1="768.5" y1="382.8" x2="765.3" y2="375.8" stroke="#222" stroke-width="0.9"/>
<line x1="768.5" y1="382.8" x2="775" y2="382" stroke="#222" stroke-width="0.9"/>
<line x1="775" y1="382" x2="779" y2="376.8" stroke="#222" stroke-width="0.9"/>
<line x1="775" y1="382" x2="778" y2="389.3" stroke="#222" stroke-width="0.9"/>
<circle cx="765.3" cy="375.8" r="2.1" fill="#5a5ae0" stroke="#2828a0" stroke-width="0.7"/>
<circle cx="759" cy="379.8" r="2.1" fill="#5a5ae0" stroke="#2828a0" stroke-width="0.7"/>
<circle cx="759.8" cy="389.3" r="2.1" fill="#5a5ae0" stroke="#2828a0" stroke-width="0.7"/>
<circle cx="767" cy="391" r="2.1" fill="#5a5ae0" stroke="#2828a0" stroke-width="0.7"/>
<circle cx="768.5" cy="382.8" r="2.1" fill="#5a5ae0" stroke="#2828a0" stroke-width="0.7"/>
<circle cx="775" cy="382" r="2.1" fill="#5a5ae0" stroke="#2828a0" stroke-width="0.7"/>
<circle cx="779" cy="376.8" r="2.1" fill="#5a5ae0" stroke="#2828a0" stroke-width="0.7"/>
<circle cx="778" cy="389.3" r="2.1" fill="#5a5ae0" stroke="#2828a0" stroke-width="0.7"/>
<rect x="802.60" y="373.60" width="9.80" height="9.30" fill="url(#bg2)" stroke="#151515" stroke-width="1.2"/>
<rect x="815.10" y="384.10" width="9.30" height="9.30" fill="url(#bg2)" stroke="#151515" stroke-width="1.2"/>
<path d="M812.5 377.5 H816.5 Q818.5 377.5 818.5 379.5 V382" fill="none" stroke="#111" stroke-width="1.1"/><path d="M816 381.5 H821 L818.5 384.5 Z" fill="#111"/>
<path d="M814.5 389.5 H809.5 Q807.5 389.5 807.5 387.5 V384.5" fill="none" stroke="#111" stroke-width="1.1"/><path d="M805 385 H810 L807.5 382 Z" fill="#111"/>
<rect x="846.60" y="373.60" width="7.80" height="7.80" fill="url(#bg2)" stroke="#151515" stroke-width="1.2"/>
<rect x="859.60" y="380.60" width="7.80" height="7.80" fill="url(#bg2)" stroke="#151515" stroke-width="1.2"/>
<path d="M855 377.3 H861.5 Q863.5 377.3 863.5 379 V380" fill="none" stroke="#111" stroke-width="1.1"/><path d="M861.3 380 H865.7 L863.5 382.3 Z" fill="#111"/>
<path d="M859 384.3 H853 Q851 384.3 851 382.5" fill="none" stroke="#111" stroke-width="1.1"/><circle cx="851" cy="381.5" r="1.1" fill="#111"/>
<path d="M846 389.8 H855 M849 387.3 H856 M849 392.3 H858.5" stroke="#111" stroke-width="1.3"/><path d="M849 387.3 H855.5 M849.5 389.8 H855 M849 392.3 H855.5" stroke="#c02020" stroke-width="1.3"/>
<rect x="890.60" y="373.60" width="7.80" height="7.80" fill="url(#bg2)" stroke="#151515" stroke-width="1.2"/>
<rect x="903.60" y="380.60" width="7.80" height="7.80" fill="url(#bg2)" stroke="#151515" stroke-width="1.2"/>
<path d="M899 377.3 H905.5 Q907.5 377.3 907.5 379 V380" fill="none" stroke="#111" stroke-width="1.1"/><path d="M905.3 380 H909.7 L907.5 382.3 Z" fill="#111"/>
<path d="M903 384.3 H897 Q895 384.3 895 382.5" fill="none" stroke="#111" stroke-width="1.1"/><circle cx="895" cy="381.5" r="1.1" fill="#111"/>
<circle cx="896.5" cy="391" r="4.4" fill="none" stroke="#d02020" stroke-width="1.1" stroke-dasharray="1.1 1.3"/>
<rect x="933.90" y="374.90" width="5.30" height="4.00" fill="url(#yg)" stroke="#151515" stroke-width="1.2"/>
<rect x="945.90" y="372.90" width="5.00" height="4.00" fill="url(#yg)" stroke="#151515" stroke-width="1.2"/>
<rect x="950.90" y="379.90" width="5.30" height="3.80" fill="url(#yg)" stroke="#151515" stroke-width="1.2"/>
<rect x="942.90" y="383.10" width="5.00" height="3.80" fill="url(#yg)" stroke="#151515" stroke-width="1.2"/>
<rect x="943.90" y="389.90" width="5.30" height="4.00" fill="url(#yg)" stroke="#151515" stroke-width="1.2"/>
<rect x="933.90" y="390.90" width="5.30" height="4.00" fill="url(#yg)" stroke="#151515" stroke-width="1.2"/>
<line x1="986.5" y1="381" x2="994.5" y2="378" stroke="#c04040" stroke-width="1.2"/>
<line x1="986.5" y1="385" x2="994.5" y2="390.5" stroke="#c04040" stroke-width="1.2"/>
<line x1="997.5" y1="381.5" x2="997.5" y2="390.5" stroke="#c04040" stroke-width="1.2"/>
<rect x="977.90" y="379.90" width="8.30" height="6.00" fill="url(#yg)" stroke="#151515" stroke-width="1.2"/>
<rect x="994.90" y="374.90" width="5.30" height="6.00" fill="url(#yg)" stroke="#151515" stroke-width="1.2"/>
<rect x="994.90" y="390.90" width="5.30" height="4.00" fill="url(#yg)" stroke="#151515" stroke-width="1.2"/>
<rect x="977.90" y="429.90" width="5.30" height="5.90" rx="0.8" fill="url(#bg)" stroke="#2a2a2a" stroke-width="1.2"/>
<rect x="977.90" y="439.80" width="5.30" height="12.30" rx="0.8" fill="url(#bg)" stroke="#2a2a2a" stroke-width="1.2"/>
<rect x="986.60" y="429.90" width="6.50" height="22.20" rx="0.8" fill="url(#bg)" stroke="#2a2a2a" stroke-width="1.2"/>
<rect x="996.80" y="429.90" width="3.30" height="22.20" rx="0.8" fill="url(#bg)" stroke="#2a2a2a" stroke-width="1.2"/>
<rect x="983.60" y="161.80" width="14.80" height="5.90" fill="url(#bg)" stroke="#151515" stroke-width="1.2"/>
<rect x="985.90" y="165.80" width="6.10" height="5.00" fill="url(#bg)" stroke="#151515" stroke-width="1.2"/>
<rect x="985.00" y="172.20" width="11.20" height="4.80" fill="url(#bg)" stroke="#151515" stroke-width="1.2"/>
<line x1="998.8" y1="156" x2="998.8" y2="179.5" stroke="#d88888" stroke-width="1.6"/>
<rect x="435" y="158" width="20.5" height="20" rx="1" fill="none" stroke="#111" stroke-width="1.6" stroke-dasharray="1.6 1.9"/>
<rect x="439.5" y="162.5" width="11" height="10.5" rx="1.3" fill="url(#bg3)" stroke="#1a1a1a" stroke-width="1.2"/></g></svg>
<svg class="a" style="left:0;top:0" width="1013" height="640"><rect x="585" y="112" width="10" height="2" fill="#3a3a3a"/><rect x="602" y="112" width="11" height="2" fill="#3a3a3a"/><rect x="606.5" y="107.5" width="2" height="11" fill="#3a3a3a"/><rect x="711" y="112" width="10" height="2" fill="#3a3a3a"/><rect x="728" y="112" width="11" height="2" fill="#3a3a3a"/><rect x="732.5" y="107.5" width="2" height="11" fill="#3a3a3a"/><rect x="836" y="112" width="10" height="2" fill="#3a3a3a"/><rect x="853" y="112" width="11" height="2" fill="#3a3a3a"/><rect x="857.5" y="107.5" width="2" height="11" fill="#3a3a3a"/><rect x="996" y="112" width="10" height="2" fill="#3a3a3a"/><rect x="1013" y="112" width="11" height="2" fill="#3a3a3a"/><rect x="1017.5" y="107.5" width="2" height="11" fill="#3a3a3a"/><rect x="840" y="439" width="10" height="2" fill="#3a3a3a"/><rect x="857" y="439" width="11" height="2" fill="#3a3a3a"/><rect x="861.5" y="434.5" width="2" height="11" fill="#3a3a3a"/><rect x="932" y="439" width="10" height="2" fill="#3a3a3a"/><rect x="949" y="439" width="11" height="2" fill="#3a3a3a"/><rect x="953.5" y="434.5" width="2" height="11" fill="#3a3a3a"/></svg>
<svg class="a" style="left:0;top:0" width="1013" height="640">
<defs>
<linearGradient id="gpg" x1="0" y1="0" x2="1" y2="1"><stop offset="0" stop-color="#fff"/><stop offset="1" stop-color="#d8d8d8"/></linearGradient>
<linearGradient id="gbl" x1="0" y1="0" x2="1" y2="1"><stop offset="0" stop-color="#e8eef4"/><stop offset="1" stop-color="#b4c6d8"/></linearGradient>
<linearGradient id="gprn" x1="0" y1="0" x2="0" y2="1"><stop offset="0" stop-color="#e4e4e4"/><stop offset="1" stop-color="#9a9a9a"/></linearGradient>
</defs>
<!-- new -->
<g transform="translate(19 64)">
<path d="M0.5 0.5 H8 L11 3.5 V15.5 H0.5 Z" fill="#fff" stroke="#b8b8b8"/>
<path d="M8 0.5 V3.5 H11" fill="#eee" stroke="#c0c0c0" stroke-width="0.8"/>
<circle cx="11.5" cy="8.5" r="4.3" fill="#2a5590" stroke="#1d3f70" stroke-width="0.6"/>
<path d="M9 8.5 H14 M11.5 6 V11" stroke="#fff" stroke-width="1.4"/>
</g>
<!-- open -->
<g transform="translate(55 65)">
<path d="M0.5 1.5 Q0.5 0.5 1.5 0.5 H6 L7.5 2 H14.5 Q15.5 2 15.5 3 V14.5 H0.5 Z" fill="#c3ad8c" stroke="#b59e7c" stroke-width="0.8"/>
<rect x="5" y="4.5" width="9" height="4" fill="#fff" stroke="#a89070" stroke-width="0.6"/>
<path d="M6.5 6.5 H12.5" stroke="#c0b0a0" stroke-width="0.8"/>
<path d="M0.5 14.5 V10 Q3 8.5 7 9 H15.5 V14.5 Z" fill="#ddd0b0" stroke="#bba888" stroke-width="0.6"/>
</g>
<!-- save -->
<g transform="translate(94 64)">
<path d="M3.5 10 H8.5 L11.5 13.5 H0.5 Z" fill="#4a80c4"/>
<rect x="0.5" y="9.8" width="11" height="6" rx="0.8" fill="#5b8fd0" stroke="#3d6eae" stroke-width="0.8"/>
<rect x="3.5" y="11.5" width="5" height="1.5" fill="#e6eef8"/>
<path d="M4.5 1 Q6 -0.3 7.5 1 V6 H10 L6 11 L2 6 H4.5 Z" fill="#fff" stroke="#8a8a8a" stroke-width="0.9"/>
</g>
<!-- print -->
<g transform="translate(129 64)">
<rect x="0.8" y="0.8" width="14.4" height="9.8" rx="1.8" fill="url(#gprn)" stroke="#2a2a2a" stroke-width="1.5"/>
<rect x="4" y="2.3" width="7.5" height="2.3" fill="#333"/>
<rect x="2.8" y="8.2" width="10.4" height="7" rx="0.8" fill="#fafafa" stroke="#262626" stroke-width="1.4"/>
</g>
<!-- import -->
<g transform="translate(180 64)">
<path d="M4.5 0.5 H12 L15.5 4 V15.5 H4.5 Z" fill="url(#gpg)" stroke="#1a1a1a" stroke-width="1"/>
<path d="M12 0.5 V4 H15.5" fill="#fff" stroke="#1a1a1a" stroke-width="0.8"/>
<path d="M0 8.2 H7" stroke="#000" stroke-width="1.2"/><path d="M6 5.5 L10 8.2 L6 11 Z" fill="#000"/>
</g>
<!-- export -->
<g transform="translate(217 64)">
<path d="M0.5 0.5 H8 L11.5 4 V15.5 H0.5 Z" fill="url(#gpg)" stroke="#1a1a1a" stroke-width="1"/>
<path d="M8 0.5 V4 H11.5" fill="#fff" stroke="#1a1a1a" stroke-width="0.8"/>
<path d="M5.5 8.2 H12.5" stroke="#000" stroke-width="1.2"/><path d="M12 5.5 L16 8.2 L12 11 Z" fill="#000"/>
</g>
<!-- undo -->
<g transform="translate(268 66)">
<path d="M0.3 4.2 L4.3 0.3 L5.3 1.3 L3.5 3 H9.5 Q15.5 3 15.5 7.5 Q15.5 11.7 9.5 11.7 H7 V9.7 H9.5 Q13.2 9.7 13.2 7.5 Q13.2 5.3 9.5 5.3 H3.5 L5.3 7.1 L4.3 8.1 Z" fill="#f2d84a" stroke="#b89a10" stroke-width="0.9" stroke-linejoin="round"/>
</g>
<!-- redo -->
<g transform="translate(305 66)" opacity="0.55">
<path d="M15.7 4.2 L11.7 0.3 L10.7 1.3 L12.5 3 H6.5 Q0.5 3 0.5 7.5 Q0.5 11.7 6.5 11.7 H9 V9.7 H6.5 Q2.8 9.7 2.8 7.5 Q2.8 5.3 6.5 5.3 H12.5 L10.7 7.1 L11.7 8.1 Z" fill="#eef0ea" stroke="#b8bcb0" stroke-width="0.9" stroke-linejoin="round"/>
</g>
<!-- copy -->
<g transform="translate(356 64)">
<rect x="0.5" y="0.5" width="9.5" height="10.5" rx="1" fill="#f8f8f8" stroke="#777" stroke-width="1"/>
<path d="M2.5 3 H8 M2.5 5 H8 M2.5 7 H6" stroke="#aaa" stroke-width="0.8"/>
<rect x="5.5" y="5" width="10" height="10.5" rx="1" fill="#f8f8f8" stroke="#777" stroke-width="1"/>
<path d="M7.5 10 H13 M7.5 12 H11" stroke="#aaa" stroke-width="0.8"/>
</g>
<!-- cut -->
<g transform="translate(393 64)">
<path d="M1.5 0.5 L9.5 10 M14.5 0.5 L6.5 10" stroke="#888" stroke-width="1.8"/>
<path d="M1.5 0.5 L9.5 10 M14.5 0.5 L6.5 10" stroke="#e0e0e0" stroke-width="0.8"/>
<circle cx="4" cy="12.2" r="3.5" fill="#d81a1a" stroke="#a01010" stroke-width="0.6"/>
<circle cx="12" cy="12.2" r="3.5" fill="#d81a1a" stroke="#a01010" stroke-width="0.6"/>
<circle cx="4" cy="12.2" r="1.3" fill="#fff"/><circle cx="12" cy="12.2" r="1.3" fill="#fff"/>
<circle cx="4" cy="12.2" r="0.6" fill="#c01010"/><circle cx="12" cy="12.2" r="0.6" fill="#c01010"/>
</g>
<!-- paste -->
<g transform="translate(430 64)">
<rect x="0.5" y="1.5" width="14.5" height="14" rx="1.5" fill="#e0b070" stroke="#a88048" stroke-width="0.9"/>
<rect x="4.5" y="0.3" width="6" height="3" rx="1" fill="#ddd" stroke="#888" stroke-width="0.7"/>
<rect x="5" y="5" width="10.5" height="10.5" rx="0.8" fill="#fff" stroke="#777" stroke-width="0.9"/>
<path d="M7 8 H13.5 M7 10 H13.5 M7 12 H11" stroke="#999" stroke-width="0.8"/>
</g>
<!-- duplicate -->
<g transform="translate(481 64)">
<rect x="0.7" y="0.7" width="10" height="10" fill="#dfe6ee" stroke="#1a1a1a" stroke-width="1.2"/>
<rect x="3.7" y="3.7" width="11.6" height="11.6" fill="url(#gbl)" stroke="#1a1a1a" stroke-width="1.2"/>
</g>
<!-- clone -->
<g transform="translate(518 64)">
<rect x="0.7" y="0.7" width="10" height="10" fill="#dfe6ee" stroke="#1a1a1a" stroke-width="1.2"/>
<rect x="3.7" y="3.7" width="11.6" height="11.6" fill="#dfe6ee" stroke="#1a1a1a" stroke-width="1.2"/>
<path d="M7.3 9 V7.5 Q7.3 5.2 9.5 5.2 Q11.7 5.2 11.7 7.5 V9" fill="none" stroke="#222" stroke-width="1.1"/>
<rect x="6.3" y="9" width="6.4" height="4.5" fill="#f0b830" stroke="#222" stroke-width="0.8"/>
</g>
<!-- unlink clone -->
<g transform="translate(555 64)">
<rect x="0.7" y="0.7" width="10" height="10" fill="#dfe6ee" stroke="#1a1a1a" stroke-width="1.2"/>
<rect x="3.7" y="3.7" width="11.6" height="11.6" fill="#dfe6ee" stroke="#1a1a1a" stroke-width="1.2"/>
<path d="M7.3 9 V7.5 Q7.3 5.2 9.5 5.2 Q11.7 5.2 11.7 6.5" fill="none" stroke="#222" stroke-width="1.1"/>
<rect x="6.3" y="9" width="6.4" height="4.5" fill="#90b040" stroke="#222" stroke-width="0.8"/>
</g>
<!-- group -->
<g transform="translate(606 64)">
<path d="M2.5 6.5 H8 V5 L12.5 13.5 H2.5 Z" fill="#dfe6ee" stroke="#222" stroke-width="1"/>
<rect x="2.5" y="6.5" width="10" height="7" fill="#dde4ec" stroke="#222" stroke-width="1"/>
<circle cx="11" cy="5.5" r="4.2" fill="#c8d8e4" stroke="#222" stroke-width="1"/>
<rect x="0" y="0" width="2" height="2" fill="#000"/><rect x="14" y="0" width="2" height="2" fill="#000"/>
<rect x="0" y="14" width="2" height="2" fill="#000"/><rect x="14" y="14" width="2" height="2" fill="#000"/>
</g>
<!-- ungroup -->
<g transform="translate(643 64)">
<rect x="2.5" y="6.5" width="10" height="7" fill="#f4dc8c" stroke="#222" stroke-width="1"/>
<circle cx="11" cy="5.5" r="4.2" fill="#c8d8e4" stroke="#222" stroke-width="1"/>
<rect x="6" y="0" width="2" height="2" fill="#000"/><rect x="14" y="0" width="2" height="2" fill="#000"/>
<rect x="0" y="4" width="2" height="2" fill="#000"/><rect x="14" y="10" width="2" height="2" fill="#000"/>
<rect x="0" y="14" width="2" height="2" fill="#000"/><rect x="12" y="14" width="2" height="2" fill="#000"/>
<rect x="6" y="10" width="2" height="2" fill="#000"/>
</g>
<!-- fill & stroke -->
<g transform="translate(694 64)">
<path d="M0.8 16 V0.8 H15.5" fill="none" stroke="#111" stroke-width="1.7"/>
<path d="M0 16 Q4 13.5 8 9.5 L13.3 4 L15.8 6.3 L10 11.5 Q6 15 1.5 16 Z" fill="#151515"/>
<path d="M3 14 Q7 11 12 5.5" fill="none" stroke="#8a8a8a" stroke-width="0.7"/>
<path d="M12.5 3.5 L15.8 0.6 L16 6.5 Z" fill="#f0b428" stroke="#333" stroke-width="0.5"/>
</g>
<!-- text T -->
<g transform="translate(731 64)">
<path d="M0.5 0 H15.5 V5 H14.5 Q14 2.5 11.5 2.5 H9.8 V13.5 Q9.8 14.6 11.5 14.6 V16 H4.5 V14.6 Q6.2 14.6 6.2 13.5 V2.5 H4.5 Q2 2.5 1.5 5 H0.5 Z" fill="#000"/>
</g>
<!-- layers -->
<g transform="translate(768 65)" fill="#fafafa" stroke="#151515" stroke-width="1.1" stroke-linejoin="round">
<path d="M0.5 8 H11.5 L15.5 12 H4.5 Z"/>
<path d="M0.5 4.5 H11.5 L15.5 8.5 H4.5 Z"/>
<path d="M0.5 1 H11.5 L15.5 5 H4.5 Z"/>
</g>
<!-- xml -->
<g transform="translate(805 64)">
<rect x="0.7" y="0.7" width="14.6" height="14.6" fill="url(#gpg)" stroke="#000" stroke-width="1.3"/>
<rect x="1.3" y="1.3" width="13.4" height="2.3" fill="#b8c8dc"/><path d="M1 3.8 H15" stroke="#000" stroke-width="1"/>
<path d="M6 6.5 L3.5 9.2 L6 12 M10 6.5 L12.5 9.2 L10 12" fill="none" stroke="#333" stroke-width="1.1"/>
</g>
<!-- obj props -->
<g transform="translate(842 64)">
<rect x="0.7" y="0.7" width="14.6" height="14.6" fill="url(#gpg)" stroke="#000" stroke-width="1.3"/>
<rect x="1.3" y="1.3" width="13.4" height="2.3" fill="#c0c8d0"/><path d="M1 3.8 H15" stroke="#000" stroke-width="1"/>
<path d="M6 5.8 Q4.5 5.8 4.5 7.2 V8.3 Q4.5 9.4 3.4 9.4 Q4.5 9.4 4.5 10.5 V11.6 Q4.5 13 6 13 M10 5.8 Q11.5 5.8 11.5 7.2 V8.3 Q11.5 9.4 12.6 9.4 Q11.5 9.4 11.5 10.5 V11.6 Q11.5 13 10 13" fill="none" stroke="#333" stroke-width="1.2"/>
</g>
<!-- align -->
<g transform="translate(879 64)">
<path d="M0.5 0 V16" stroke="#c03030" stroke-width="1.2"/>
<rect x="2.5" y="0.8" width="6" height="3.5" fill="#c4d0e0" stroke="#333" stroke-width="0.9"/>
<rect x="2.5" y="6.5" width="13" height="3.5" fill="#c4d0e0" stroke="#333" stroke-width="0.9"/>
<rect x="2.5" y="11.8" width="10" height="3.5" fill="#c4d0e0" stroke="#333" stroke-width="0.9"/>
</g>
<!-- doc props -->
<g transform="translate(931 64)" opacity="0.55">
<path d="M0.5 0.5 H9 L12.5 4 V15.5 H0.5 Z" fill="#fcfcfc" stroke="#999" stroke-width="1"/>
<path d="M9 0.5 V4 H12.5" fill="#eee" stroke="#999" stroke-width="0.8"/>
<path d="M5.2 7.5 A2.6 2.6 0 1 0 7.8 10.1" fill="none" stroke="#777" stroke-width="1.6"/>
<path d="M7 9.5 L12.3 14.8" stroke="#777" stroke-width="1.9"/>
</g>
<!-- prefs -->
<g transform="translate(962 60)">
<path d="M9.5 9.5 L16 16" stroke="#808080" stroke-width="3" stroke-linecap="round"/>
<path d="M9.5 9.5 L16 16" stroke="#f4f4f4" stroke-width="1.2" stroke-linecap="round"/>
<path d="M6.2 5 A3.2 3.2 0 1 0 10.5 9.3" fill="none" stroke="#808080" stroke-width="2.4"/>
<path d="M6.2 5 A3.2 3.2 0 1 0 10.5 9.3" fill="none" stroke="#f4f4f4" stroke-width="0.9"/>
<path d="M19.5 18.6 A3.2 3.2 0 1 0 15.2 14.3" fill="none" stroke="#808080" stroke-width="2.4"/>
<path d="M19.5 18.6 A3.2 3.2 0 1 0 15.2 14.3" fill="none" stroke="#f4f4f4" stroke-width="0.9"/>
<path d="M13 11 L18.6 6" stroke="#808080" stroke-width="2.6" stroke-linecap="round"/>
<path d="M13 11 L18.6 6" stroke="#fafafa" stroke-width="1" stroke-linecap="round"/>
<path d="M6.5 17.8 L12.3 12.5" stroke="#2a4a80" stroke-width="4.2" stroke-linecap="round"/>
<path d="M6.5 17.8 L12.3 12.5" stroke="#5a88d0" stroke-width="2.4" stroke-linecap="round"/>
</g>
</svg>

<svg class="a" style="left:0;top:0" width="1013" height="640">
<defs>
<linearGradient id="gor" x1="0" y1="0" x2="0" y2="1"><stop offset="0" stop-color="#f8c070"/><stop offset="1" stop-color="#e88820"/></linearGradient>
</defs>
<!-- doc (select in all layers?) -->
<g transform="translate(20 106)">
<path d="M0.5 0.5 H8.5 L11.5 3.5 V15.5 H0.5 Z" fill="#eef2f8" stroke="#b0b0b0" stroke-width="0.9"/>
<path d="M2 3 H9 M2 5 H9 M2 7 H10 M2 9 H10" stroke="#a8c0dc" stroke-width="1"/>
<rect x="2" y="11" width="4.5" height="3" fill="#7a8898"/>
<path d="M7.5 11.2 H11 M7.5 15 H11 M9.2 11.2 V15" stroke="#000" stroke-width="1.2"/>
</g>
<!-- select all in all layers -->
<g transform="translate(55 106)">
<rect x="0.7" y="0.7" width="14.6" height="14.6" fill="none" stroke="#000" stroke-width="1.3" stroke-dasharray="2 1.5"/>
<g fill="#f4f4f4" stroke="#444" stroke-width="0.8">
<path d="M2.5 9.5 L4 8 H11 L13 10.5 L11.5 12.5 H4 Z"/>
<path d="M2.5 7 L4 5.5 H11 L13 8 L11.5 10 H4 Z"/>
<path d="M2.5 4.5 L4 3 H11 L13 5.5 L11.5 7.5 H4 Z"/>
</g>
</g>
<!-- select same -->
<g transform="translate(92 106)">
<rect x="0.7" y="0.7" width="14.6" height="14.6" fill="none" stroke="#c02020" stroke-width="1.3" stroke-dasharray="2 1.5"/>
<rect x="2.8" y="6.5" width="8.5" height="6.5" fill="#f4d880" stroke="#111" stroke-width="1.1"/>
<circle cx="9.5" cy="6.3" r="3.8" fill="#c8d8e4" stroke="#111" stroke-width="1.1"/>
</g>
<!-- transform dialog -->
<g transform="translate(130 107)">
<rect x="0.6" y="3.6" width="10" height="10" fill="none" stroke="#222" stroke-width="1.2" stroke-dasharray="2 1.6"/>
<rect x="9.2" y="0" width="4.8" height="4.8" fill="#2a2a2a"/>
</g>
<!-- rotate ccw -->
<g transform="translate(181 107)">
<path d="M13 1.5 Q5 1 4.5 8" fill="none" stroke="#d07010" stroke-width="3.2"/>
<path d="M13 1.5 Q5 1 4.5 8" fill="none" stroke="#f8c070" stroke-width="1.4"/>
<path d="M0.5 8 H8.7 L4.6 12.6 Z" fill="url(#gor)" stroke="#c86a10" stroke-width="0.9" stroke-linejoin="round"/>
</g>
<!-- rotate cw -->
<g transform="translate(219 107)">
<path d="M0 1.5 Q8 1 8.5 8" fill="none" stroke="#d07010" stroke-width="3.2"/>
<path d="M0 1.5 Q8 1 8.5 8" fill="none" stroke="#f8c070" stroke-width="1.4"/>
<path d="M4.3 8 H12.5 L8.4 12.6 Z" fill="url(#gor)" stroke="#c86a10" stroke-width="0.9" stroke-linejoin="round"/>
</g>
<!-- flip h -->
<g transform="translate(254 109)">
<path d="M0.5 4.5 L4.5 0.5 L5.5 1.5 L4 3.2 H12 L10.5 1.5 L11.5 0.5 L15.5 4.5 L11.5 8.5 L10.5 7.5 L12 5.8 H4 L5.5 7.5 L4.5 8.5 Z" fill="#f8c070" stroke="#c86a10" stroke-width="0.9" stroke-linejoin="round"/>
</g>
<!-- flip v -->
<g transform="translate(295 106)">
<path d="M4.5 0.3 L8.5 4.3 L7.5 5.3 L5.8 3.8 V12 L7.5 10.5 L8.5 11.5 L4.5 15.5 L0.5 11.5 L1.5 10.5 L3.2 12 V3.8 L1.5 5.3 L0.5 4.3 Z" fill="#f8c070" stroke="#c86a10" stroke-width="0.9" stroke-linejoin="round"/>
</g>
<!-- raise top -->
<g transform="translate(342 106)">
<rect x="0.6" y="0.6" width="15" height="2.4" fill="#fff" stroke="#000" stroke-width="1.1"/>
<path d="M0 5 H6.5 M0 8 H6.5 M0 11 H6.5 M0 14 H6.5" stroke="#000" stroke-width="1.8"/>
<path d="M13.5 15 V6" stroke="#000" stroke-width="1.1"/><path d="M11 7.5 L13.5 4.3 L16 7.5 Z" fill="#000"/>
</g>
<!-- raise -->
<g transform="translate(379 106)">
<rect x="0.6" y="3.6" width="15" height="2.4" fill="#fff" stroke="#000" stroke-width="1.1"/>
<path d="M0 1 H6.5 M0 8 H6.5 M0 11 H9.5 M0 14 H6.5" stroke="#000" stroke-width="1.8"/>
<path d="M11.5 11.5 L13 9" stroke="#000" stroke-width="1.1"/><path d="M11 9.5 L14 7 L15.5 10 Z" fill="#000"/>
</g>
<!-- lower -->
<g transform="translate(416 106)">
<path d="M9.5 1 H16 M6.5 4 H16 M9.5 7 H16 M9.5 14 H16" stroke="#000" stroke-width="1.8"/>
<rect x="0.6" y="9.6" width="15" height="2.4" fill="#f0e0a0" stroke="#000" stroke-width="1.1"/>
<path d="M4.5 4 L3 6.5" stroke="#000" stroke-width="1.1"/><path d="M0.5 5.5 L2.5 8.5 L5 6 Z" fill="#000"/>
</g>
<!-- lower bottom -->
<g transform="translate(453 106)">
<path d="M9.5 1 H16 M9.5 4 H16 M9.5 7 H16 M9.5 10 H16" stroke="#000" stroke-width="1.8"/>
<rect x="0.6" y="12.6" width="15" height="2.4" fill="#f0e0a0" stroke="#000" stroke-width="1.1"/>
<path d="M3.5 0 V9" stroke="#000" stroke-width="1.1"/><path d="M1 7.5 L3.5 10.7 L6 7.5 Z" fill="#000"/>
</g>
<!-- lock -->
<g transform="translate(882 105)">
<path d="M6.5 7 V4.5 Q6.5 1.2 9.5 1.2 Q12.5 1.2 12.5 4.5 V5" fill="none" stroke="#222" stroke-width="1.3"/>
<rect x="0.8" y="7" width="10.5" height="7.5" rx="0.8" fill="#f2c440" stroke="#222" stroke-width="1.2"/>
<rect x="5.3" y="9.5" width="1.5" height="2.5" fill="#333"/>
</g>
</svg>

<svg class="a" style="left:0;top:0" width="1013" height="640">
<g fill="none" stroke="#ee1010" stroke-width="3.3" stroke-linecap="round" stroke-linejoin="round">
<path d="M897.8 55 C888 55, 880 55, 875 56.5 C870 59, 868 64, 868.2 69 C868 76, 869 82, 874.5 88 C879 92, 885 94, 890 94 C896 91, 900 86, 902 79 C904 72, 902 65, 897.5 58"/>
<path d="M885 139.5 C900 139.5, 908 139.6, 912 140.1 C925 142, 935 145, 947 146.5 C960 149, 968 152, 974 156 C980 160, 982 165, 982 171 C981 177, 978 180, 973 183.5 C966 187, 958 190, 945 192 C932 193.5, 918 194, 905 193 C890 192, 875 190.5, 855 189 C845 187.5, 840 185, 830 183 C818 181, 810 178, 803 176 C796 173, 792 170, 791.5 163 C791.5 158, 795 155, 802 152 C812 147, 822 144, 835 142.5 C848 140.5, 860 139.6, 885 139.5"/>
<path d="M845 200 C845 190, 845 182, 848 179.5 C852 178, 858 178, 862 178.5 C868 180, 873 183, 877 186 C882 192, 888 200, 891 210 C892.5 216, 892 221, 888 223.5 C882 225.5, 873 225.5, 866 224.5 C858 223, 851 219, 847 213 C844 208, 844 204, 845 200"/>
</g>
</svg>

</body></html>
